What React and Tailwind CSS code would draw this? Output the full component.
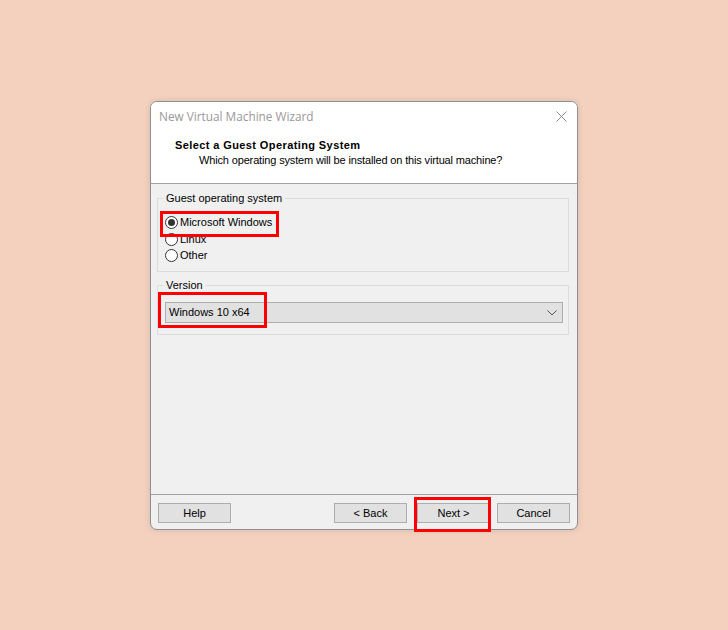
import React from 'react';

function Radio({ checked, label }) {
  return (
    <div className="flex h-[16px] items-center">
      <span className="flex h-[13px] w-[13px] items-center justify-center rounded-full border border-[#333333] bg-white">
        {checked && <span className="h-[7px] w-[7px] rounded-full bg-[#333333]" />}
      </span>
      <span className="ml-[2px] text-[11px] leading-none text-black">{label}</span>
    </div>
  );
}

function Button({ children, className = '' }) {
  return (
    <button className={`h-[20px] w-[73px] border border-[#adadad] bg-[#e1e1e1] text-[11px] leading-none text-black ${className}`}>
      {children}
    </button>
  );
}

export default function App() {
  return (
    <div
      className="h-[630px] w-[728px] bg-[#f3d1be] pl-[150px] pt-[101px]"
      style={{ fontFamily: '"Liberation Sans", Arial, sans-serif' }}
    >
      <div className="flex h-[429px] w-[428px] flex-col rounded-[7px] border border-[#8d929a] bg-[#f0f0f0] shadow-[0_0_6px_rgba(0,0,0,0.12)]">
        {/* Title bar */}
        <div className="flex h-[29px] items-center justify-between rounded-t-[6px] bg-white pl-[8px] pr-[9px]">
          <span className="text-[11.8px] text-[#999999]" style={{ fontFamily: '"Open Sans", "Noto Sans", sans-serif' }}>
            New Virtual Machine Wizard
          </span>
          <svg width="11" height="11" viewBox="0 0 11 11" className="mr-[1px]">
            <path d="M0.5 0.5 L10.5 10.5 M10.5 0.5 L0.5 10.5" stroke="#8a8a8a" strokeWidth="1" />
          </svg>
        </div>

        {/* Header */}
        <div className="h-[53px] border-b border-[#a0a0a0] bg-white pl-[24px] pt-[7px]">
          <div className="text-[11px] font-bold leading-[14px] tracking-[0.4px] text-black">Select a Guest Operating System</div>
          <div className="pl-[24px] pt-[1px] text-[11px] leading-[14px] tracking-[-0.15px] text-black">
            Which operating system will be installed on this virtual machine?
          </div>
        </div>

        {/* Body */}
        <div className="flex-1 pl-[6px] pr-[8px] pt-[8px]">
          <fieldset className="h-[80px] border border-[#dcdcdc] pl-[7px]">
            <legend className="-ml-[2px] px-[3px] text-[11px] leading-[13px] text-black">Guest operating system</legend>
            <div className="relative mt-[9px]">
              <Radio checked label="Microsoft Windows" />
              <div className="h-[1px]" />
              <Radio label="Linux" />
              <Radio label="Other" />
              <span className="absolute -left-[5px] -top-[3px] h-[26px] w-[119px] border-[3px] border-[#ff0000]" />
            </div>
          </fieldset>

          <fieldset className="mt-[7px] h-[56px] border border-[#dcdcdc] pl-[7px] pr-[5px]">
            <legend className="-ml-[2px] px-[3px] text-[11px] leading-[13px] text-black">Version</legend>
            <div className="relative mt-[10px]">
              <div className="flex h-[21px] items-center justify-between border border-[#adadad] bg-[#e1e1e1] pl-[3px] pr-[5px]">
                <span className="text-[11px] leading-none text-black">Windows 10 x64</span>
                <svg width="10" height="6" viewBox="0 0 10 6">
                  <path d="M0.5 0.5 L5 5 L9.5 0.5" fill="none" stroke="#555555" strokeWidth="1" />
                </svg>
              </div>
              <span className="absolute -left-[7px] -top-[10px] h-[36px] w-[109px] border-[3px] border-[#ff0000]" />
            </div>
          </fieldset>
        </div>

        {/* Footer */}
        <div className="flex h-[35px] items-start rounded-b-[6px] border-t border-[#a0a0a0] px-[7px] pt-[8px]">
          <Button>Help</Button>
          <div className="flex-1" />
          <Button>&lt; Back</Button>
          <div className="relative ml-[10px] flex">
            <Button>Next &gt;</Button>
            <span className="absolute -left-[3px] -top-[6px] h-[35px] w-[77px] border-[3px] border-[#ff0000]" />
          </div>
          <Button className="ml-[7px]">Cancel</Button>
        </div>
      </div>
    </div>
  );
}
